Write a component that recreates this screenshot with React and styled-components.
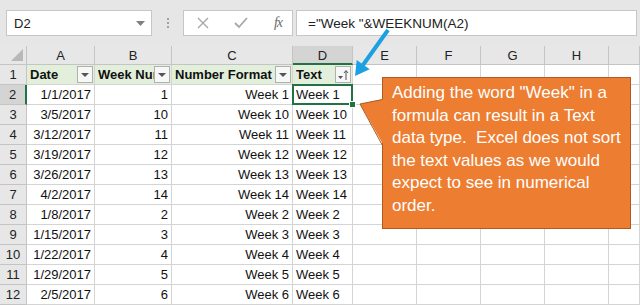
import React from 'react'
import styled, { createGlobalStyle, css } from 'styled-components'

const GlobalStyle = createGlobalStyle`
  html, body {
    margin: 0;
    padding: 0;
    background: #e6e6e6;
  }
`

const columns = ['A', 'B', 'C', 'D', 'E', 'F', 'G', 'H', '']

const rows = [
  ['1/1/2017', '1', 'Week 1'],
  ['3/5/2017', '10', 'Week 10'],
  ['3/12/2017', '11', 'Week 11'],
  ['3/19/2017', '12', 'Week 12'],
  ['3/26/2017', '13', 'Week 13'],
  ['4/2/2017', '14', 'Week 14'],
  ['1/8/2017', '2', 'Week 2'],
  ['1/15/2017', '3', 'Week 3'],
  ['1/22/2017', '4', 'Week 4'],
  ['1/29/2017', '5', 'Week 5'],
  ['2/5/2017', '6', 'Week 6'],
]

const noteLines = [
  'Adding the word "Week" in a',
  'formula can result in a Text',
  'data type.  Excel does not sort',
  'the text values as we would',
  'expect to see in numerical',
  'order.',
]

const FilterButton = ({ sorted }) => (
  <FilterBtn>
    {sorted ? (
      <svg width="14" height="14" viewBox="0 0 14 14">
        <path d="M2 8 L7 8 L4.5 11 Z" fill="#555" />
        <path d="M10 12 L10 3" stroke="#555" strokeWidth="1" />
        <path d="M8 5 L10 2.5 L12 5" stroke="#555" strokeWidth="1" fill="none" />
      </svg>
    ) : (
      <svg width="10" height="6" viewBox="0 0 10 6">
        <path d="M1 1 L9 1 L5 5 Z" fill="#555" />
      </svg>
    )}
  </FilterBtn>
)

function App() {
  return (
    <Page>
      <GlobalStyle />
      <FormulaBar>
        <NameBox>
          <span>D2</span>
          <svg width="9" height="5" viewBox="0 0 9 5">
            <path d="M0 0 L9 0 L4.5 5 Z" fill="#808080" />
          </svg>
        </NameBox>
        <Grip>
          <i /><i /><i />
        </Grip>
        <ActionBox>
          <svg width="12" height="12" viewBox="0 0 12 12">
            <path d="M1 1 L11 11 M11 1 L1 11" stroke="#a8a8a8" strokeWidth="1.4" />
          </svg>
          <svg width="14" height="12" viewBox="0 0 14 12">
            <path d="M1 6 L5 10 L13 1" stroke="#a8a8a8" strokeWidth="1.8" fill="none" />
          </svg>
          <Fx>fx</Fx>
        </ActionBox>
        <FormulaInput>="Week "&amp;WEEKNUM(A2)</FormulaInput>
      </FormulaBar>

      <Sheet>
        <Corner>
          <svg width="12" height="12" viewBox="0 0 12 12">
            <path d="M12 0 L12 12 L0 12 Z" fill="#b8b8b8" />
          </svg>
        </Corner>
        {columns.map((c, i) => (
          <ColHeader key={i} active={c === 'D'}>{c}</ColHeader>
        ))}

        <RowHeader>1</RowHeader>
        <TitleCell><TitleText>Date</TitleText><FilterButton /></TitleCell>
        <TitleCell><TitleText>Week Number</TitleText><FilterButton /></TitleCell>
        <TitleCell><TitleText>Number Format</TitleText><FilterButton /></TitleCell>
        <TitleCell><TitleText>Text</TitleText><FilterButton sorted /></TitleCell>
        {columns.slice(4).map((c, i) => <Cell key={i} />)}

        {rows.map((r, idx) => (
          <React.Fragment key={idx}>
            <RowHeader active={idx === 0}>{idx + 2}</RowHeader>
            <Cell align="right">{r[0]}</Cell>
            <Cell align="right">{r[1]}</Cell>
            <Cell align="right">{r[2]}</Cell>
            <Cell selected={idx === 0}>{r[2]}</Cell>
            {columns.slice(4).map((c, i) => <Cell key={i} />)}
          </React.Fragment>
        ))}
      </Sheet>

      <Note>
        {noteLines.map((l, i) => <NoteLine key={i}>{l}</NoteLine>)}
      </Note>
      <Overlay width="640" height="305" viewBox="0 0 640 305">
        <path d="M360 104 L384 99 L384 146 Z" fill="#ed7d31" />
        <path d="M360 104 L382.5 99.5 M360 104 L382.5 145.5" stroke="#ae5a21" strokeWidth="1" />
        <path d="M388 30 L363 65" stroke="#1ba1e2" strokeWidth="4" />
        <path d="M355 76 L369.7 69.3 L356.7 59.9 Z" fill="#1ba1e2" />
      </Overlay>
    </Page>
  )
}

export default App

const Page = styled.div`
  position: relative;
  width: 640px;
  height: 305px;
  overflow: hidden;
  background: #e6e6e6;
  font-family: "Liberation Sans", Arial, sans-serif;
  color: #111;
`

/** Formula bar **/
const FormulaBar = styled.div`
  height: 46px;
  box-sizing: border-box;
  padding: 10px 3px 0 6px;
  display: flex;
  align-items: flex-start;
`

const BarBox = styled.div`
  height: 26px;
  box-sizing: border-box;
  background: #fff;
  border: 1px solid #c6c6c6;
  display: flex;
  align-items: center;
`

const NameBox = styled(BarBox)`
  width: 146px;
  padding: 0 6px 0 7px;
  justify-content: space-between;
  font-size: 13px;
  color: #222;
`

const Grip = styled.div`
  width: 31px;
  height: 26px;
  display: flex;
  flex-direction: column;
  align-items: center;
  justify-content: center;
  gap: 2px;

  i {
    width: 2px;
    height: 2px;
    background: #a0a0a0;
  }
`

const ActionBox = styled(BarBox)`
  width: 110px;
  padding: 0 10px 0 13px;
  justify-content: space-between;
`

const Fx = styled.span`
  font-family: "Liberation Serif", serif;
  font-style: italic;
  font-size: 14px;
  color: #6a6a6a;
  letter-spacing: -1px;
`

const FormulaInput = styled(BarBox)`
  flex: 1;
  margin-left: 3px;
  padding-left: 11px;
  font-size: 13.5px;
  color: #222;
`

/** Sheet **/
const Sheet = styled.div`
  display: grid;
  grid-template-columns: 27px 68px 77px 121px 60px 64px 64px 64px 64px 1fr;
  grid-template-rows: 19px;
  grid-auto-rows: 20px;
  font-size: 13px;
`

const HeaderBase = css`
  box-sizing: border-box;
  background: #e7e7e7;
  border-right: 1px solid #c4c4c4;
  border-bottom: 1px solid #c4c4c4;
  display: flex;
  align-items: center;
  justify-content: center;
  color: #222;
`

const Corner = styled.div`
  ${HeaderBase}
  align-items: flex-end;
  justify-content: flex-end;
  padding: 0 3px 3px 0;
`

const ColHeader = styled.div`
  ${HeaderBase}
  ${p => p.active && css`
    background: #d4d4d4;
    border-bottom: 2px solid #217346;
    padding-top: 1px;
  `}
`

const RowHeader = styled.div`
  ${HeaderBase}
  ${p => p.active && css`
    background: #d4d4d4;
    border-right: 2px solid #217346;
  `}
`

const Cell = styled.div`
  position: relative;
  box-sizing: border-box;
  background: #fff;
  border-right: 1px solid #d4d4d4;
  border-bottom: 1px solid #d4d4d4;
  padding: 0 3px;
  display: flex;
  align-items: center;
  justify-content: ${p => (p.align === 'right' ? 'flex-end' : 'flex-start')};
  white-space: nowrap;

  ${p => p.selected && css`
    &::after {
      content: '';
      position: absolute;
      left: -1px;
      top: -1px;
      right: -1px;
      bottom: -1px;
      border: 2px solid #217346;
    }
    &::before {
      content: '';
      position: absolute;
      right: -4px;
      bottom: -4px;
      width: 5px;
      height: 5px;
      background: #217346;
      border: 1px solid #fff;
      z-index: 1;
    }
  `}
`

const TitleCell = styled(Cell)`
  background: #e2efda;
  font-weight: bold;
  padding-right: 1px;
`

const TitleText = styled.span`
  flex: 1;
  overflow: hidden;
  white-space: nowrap;
`

const FilterBtn = styled.span`
  flex: none;
  width: 16px;
  height: 17px;
  box-sizing: border-box;
  border: 1px solid #b0b0b0;
  background: #f7f7f7;
  display: flex;
  align-items: center;
  justify-content: center;
`

/** Callout **/
const Note = styled.div`
  position: absolute;
  left: 382px;
  top: 77px;
  width: 249px;
  height: 152px;
  box-sizing: border-box;
  background: #ed7d31;
  border: 1px solid #ae5a21;
  padding: 4px 0 0 9px;
  color: #fff;
  font-size: 17px;
  line-height: 22.6px;
`

const NoteLine = styled.div`
  white-space: pre;
`

const Overlay = styled.svg`
  position: absolute;
  left: 0;
  top: 0;
  pointer-events: none;
`
